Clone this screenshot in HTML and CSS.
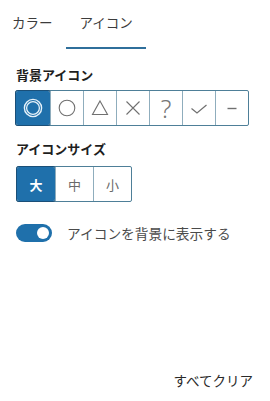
FILE: index.html
```html
<!DOCTYPE html>
<html lang="ja">
<head>
<meta charset="utf-8">
<link rel="stylesheet" href="styles.css">
</head>
<body>
<div class="tabs">
  <div class="tab tab-first">カラー</div>
  <div class="tab tab-active">アイコン</div>
</div>
<div class="panel">
  <div class="heading heading-icon">背景アイコン</div>
  <div class="group icon-group">
    <div class="btn icon-btn selected">
      <svg width="22" height="22" viewBox="0 0 22 22"><circle cx="11" cy="11" r="8.6" fill="none" stroke="#e6f2fa" stroke-width="1.4"/><circle cx="11" cy="11" r="6.4" fill="none" stroke="#e6f2fa" stroke-width="1.3"/></svg>
    </div>
    <div class="btn icon-btn">
      <svg width="22" height="22" viewBox="0 0 22 22"><circle cx="11" cy="11" r="7.8" fill="none" stroke="#707070" stroke-width="1.1"/></svg>
    </div>
    <div class="btn icon-btn">
      <svg width="22" height="22" viewBox="0 0 22 22"><path d="M11 4 L18.5 17.5 L3.5 17.5 Z" fill="none" stroke="#707070" stroke-width="1.1"/></svg>
    </div>
    <div class="btn icon-btn">
      <svg width="22" height="22" viewBox="0 0 22 22"><path d="M4.5 4.5 L17.5 17.5 M17.5 4.5 L4.5 17.5" fill="none" stroke="#707070" stroke-width="1.1"/></svg>
    </div>
    <div class="btn icon-btn q">?</div>
    <div class="btn icon-btn">
      <svg width="22" height="22" viewBox="0 0 22 22"><path d="M3.5 11.5 L9 16 L18.5 8" fill="none" stroke="#707070" stroke-width="1.2"/></svg>
    </div>
    <div class="btn icon-btn">
      <svg width="22" height="22" viewBox="0 0 22 22"><path d="M6.5 11.5 L15.5 11.5" fill="none" stroke="#707070" stroke-width="1.4"/></svg>
    </div>
  </div>
  <div class="heading heading-size">アイコンサイズ</div>
  <div class="group size-group">
    <div class="btn size-btn selected">大</div>
    <div class="btn size-btn">中</div>
    <div class="btn size-btn">小</div>
  </div>
  <div class="toggle-row">
    <div class="toggle"><span class="knob"></span></div>
    <span class="toggle-label">アイコンを背景に表示する</span>
  </div>
  <div class="footer">
    <span class="clear">すべてクリア</span>
  </div>
</div>
</body>
</html>
```
FILE: styles.css
```css
* { box-sizing: border-box; }
html, body {
  margin: 0;
  padding: 0;
  background: #ffffff;
  font-family: "Noto Sans CJK JP", "Noto Sans", sans-serif;
  color: #1e1e1e;
}
body { width: 270px; height: 401px; overflow: hidden; }

.tabs {
  display: flex;
  height: 49px;
}
.tab {
  font-size: 13.5px;
  line-height: 20px;
  padding-top: 12px;
  color: #3c3c3c;
  height: 49px;
}
.tab-first { padding-left: 12px; padding-right: 13px; }
.tab-active {
  padding-left: 14px;
  padding-right: 13px;
  border-bottom: 2px solid #2f6f9b;
}

.panel {
  padding: 0 16px;
  display: flex;
  flex-direction: column;
}

.heading {
  font-size: 13px;
  font-weight: 700;
  line-height: 18px;
  color: #1e1e1e;
}
.heading-icon { margin-top: 17px; }
.heading-size { margin-top: 14px; }

.group {
  display: flex;
  align-self: flex-start;
  border: 1px solid #4e7f98;
  border-radius: 2px;
  background: #fff;
}
.icon-group { margin-top: 6px; margin-left: -1px; }
.size-group { margin-top: 8px; }

.btn {
  display: flex;
  align-items: center;
  justify-content: center;
  border-left: 1px solid #8fadbd;
  color: #707070;
}
.btn:first-child { border-left: none; }
.btn.selected {
  background: #1f70ab;
  color: #fff;
  outline: 1px solid #1a4f78;
  border-radius: 2px;
}

.icon-btn { width: 33px; height: 34px; }
.icon-btn.selected { width: 34px; }
.q {
  font-family: "Noto Sans", sans-serif;
  font-size: 25px;
  font-weight: 300;
  line-height: 1;
  color: #777;
}

.size-btn {
  width: 38px;
  height: 34px;
  font-size: 13px;
  color: #6a6a6a;
}
.size-btn.selected { color: #fff; font-weight: 700; }

.toggle-row {
  display: flex;
  align-items: center;
  margin-top: 21px;
  gap: 15px;
}
.toggle {
  position: relative;
  width: 36px;
  height: 18px;
  border-radius: 9px;
  background: #1f70ab;
  flex: none;
}
.knob {
  position: absolute;
  right: 3px;
  top: 3px;
  width: 12px;
  height: 12px;
  border-radius: 50%;
  background: #fff;
}
.toggle-label {
  font-size: 13.7px;
  color: #4a4a4a;
  line-height: 20px;
}

.footer {
  display: flex;
  justify-content: flex-end;
  margin-top: 127px;
  padding-right: 1px;
}
.clear {
  font-size: 13.5px;
  line-height: 20px;
  color: #2a2a2a;
}
```
